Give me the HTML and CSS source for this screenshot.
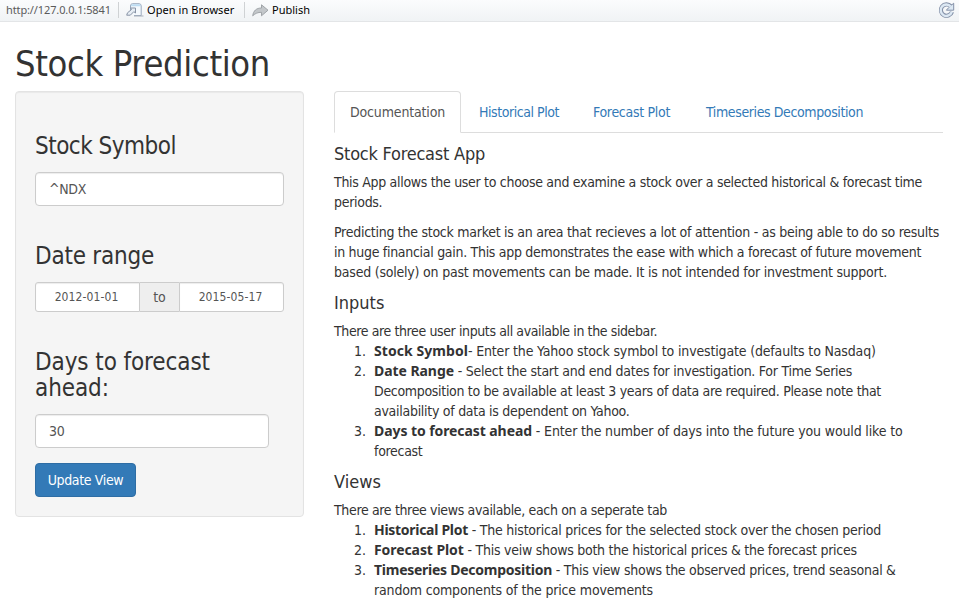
FILE: index.html
```html
<!DOCTYPE html>
<html lang="en">
<head>
<meta charset="utf-8">
<title>Stock Prediction</title>
<link rel="stylesheet" href="styles.css">
</head>
<body>
<header class="toolbar">
  <span class="url">http://127.0.0.1:5841</span>
  <span class="divider"></span>
  <span class="tool open">
    <svg width="18" height="14" viewBox="0 0 18 14">
      <path d="M4.500 9V3Q4.500 .7 6.500.7H13Q15.200.7 15.200 3V12.500H8" fill="#f4f9fd" stroke="#9aa9bd"/>
      <path d="M5 3Q5 1.200 6.500 1.200H13Q14.700 1.200 14.700 3.300H5z" fill="#bcdcf2"/>
      <path d="M4.500 5H9.500V10L7.800 8.700L4.300 12.200L.7 12.200L1.500 9.800L5.500 6.500z" fill="#e6edf4" stroke="#8793a5"/>
      <path d="M8 13H17.500" stroke="#a7afba"/>
    </svg>
    <span>Open in Browser</span>
  </span>
  <span class="divider"></span>
  <span class="tool publish">
    <svg width="17" height="13" viewBox="0 0 17 13">
      <path d="M.7 11.800C1.500 6.500 4.500 4 9.500 4V.8L16 6.200L9.500 11.800V8.300C6 8.300 3.300 9.300.7 11.800z" fill="#c3c7ca" stroke="#989da1" stroke-width=".9"/>
    </svg>
    <span>Publish</span>
  </span>
  <svg class="refresh" width="17" height="17" viewBox="0 0 17 17">
    <path d="M12.800 4.200A5.700 5.700 0 1 0 14 9.800" fill="none" stroke="#8491a8" stroke-width="4.200"/>
    <path d="M15.700 1.200V8.200H8.400L10.500 5.800z" fill="#dce8f3" stroke="#8491a8"/>
    <path d="M12.800 4.600A5.700 5.700 0 1 0 13.800 9.900" fill="none" stroke="#dce8f3" stroke-width="2.400"/>
  </svg>
</header>

<div class="container">
  <h2>Stock Prediction</h2>
  <div class="row">
    <form class="well">
      <div class="group">
        <h3 class="h-symbol">Stock Symbol</h3>
        <input class="control symbol" type="text" value="^NDX">
      </div>
      <div class="group dates">
        <h3 class="h-date">Date range</h3>
        <div class="range">
          <input class="control small" type="text" value="2012-01-01">
          <span class="addon">to</span>
          <input class="control small" type="text" value="2015-05-17">
        </div>
      </div>
      <div class="group days">
        <h3 class="h-days">Days to forecast<br>ahead:</h3>
        <input class="control number" type="text" value="30">
      </div>
      <button class="btn" type="button">Update View</button>
    </form>

    <main>
      <ul class="tabs">
        <li class="tab active t1">Documentation</li>
        <li class="tab t2">Historical Plot</li>
        <li class="tab t3">Forecast Plot</li>
        <li class="tab t4">Timeseries Decomposition</li>
      </ul>
      <h4 class="h-app">Stock Forecast App</h4>
      <p>
        <span class="line a1">This App allows the user to choose and examine a stock over a selected historical &amp; forecast time</span>
        <span class="line a2">periods.</span>
      </p>
      <p>
        <span class="line b1">Predicting the stock market is an area that recieves a lot of attention - as being able to do so results</span>
        <span class="line b2">in huge financial gain. This app demonstrates the ease with which a forecast of future movement</span>
        <span class="line b3">based (solely) on past movements can be made. It is not intended for investment support.</span>
      </p>
      <h4>Inputs</h4>
      <div class="line c0">There are three user inputs all available in the sidebar.</div>
      <ol>
        <li><span class="line c1"><b class="k1">Stock Symbol</b>- Enter the Yahoo stock symbol to investigate (defaults to Nasdaq)</span></li>
        <li>
          <span class="line c2"><b class="k2">Date Range</b> - Select the start and end dates for investigation. For Time Series</span>
          <span class="line c3">Decomposition to be available at least 3 years of data are required. Please note that</span>
          <span class="line c4">availability of data is dependent on Yahoo.</span>
        </li>
        <li>
          <span class="line c5"><b class="k3">Days to forecast ahead</b> - Enter the number of days into the future you would like to</span>
          <span class="line c6">forecast</span>
        </li>
      </ol>
      <h4>Views</h4>
      <div class="line d0">There are three views available, each on a seperate tab</div>
      <ol>
        <li><span class="line d1"><b class="k4">Historical Plot</b> - The historical prices for the selected stock over the chosen period</span></li>
        <li><span class="line d2"><b class="k5">Forecast Plot</b> - This veiw shows both the historical prices &amp; the forecast prices</span></li>
        <li>
          <span class="line d3"><b class="k6">Timeseries Decomposition</b> - This view shows the observed prices, trend seasonal &amp;</span>
          <span class="line d4">random components of the price movements</span>
        </li>
      </ol>
    </main>
  </div>
</div>
</body>
</html>
```
FILE: styles.css
```css
* { box-sizing: border-box; }
html, body { height: 100%; overflow: hidden; }
body {
  margin: 0;
  background: #fff;
  color: #333;
  font: 14px/20px "DejaVu Sans Condensed", "DejaVu Sans", sans-serif;
}

/* viewer toolbar */
.toolbar {
  display: flex;
  align-items: center;
  height: 22px;
  padding: 0 4px 1px 6px;
  border-bottom: 1px solid #e3e5e7;
  background: linear-gradient(#fbfcfd, #f0f3f5);
  font: 11px/20px "Noto Sans", sans-serif;
  color: #000;
}
.url { width: 112px; color: #5b5b5b; letter-spacing: -.12px; }
.divider { width: 1px; height: 16px; background: #cfd2d4; }
.tool { display: flex; align-items: center; }
.open { width: 125px; padding-left: 7px; gap: 3px; letter-spacing: .07px; }
.publish { padding-left: 7px; gap: 3px; }
.refresh { margin-left: auto; }

.container { padding: 22px 15px 0; }
h2, h3, h4 { margin: 0; font-weight: 400; white-space: nowrap; }
h2 { margin-bottom: 8px; font-size: 36px; line-height: 39px; letter-spacing: -.354px; }
h3 { font-size: 24px; line-height: 26px; }
h4 { margin: 11px 0 9px; font-size: 18px; line-height: 19px; }
.row { display: grid; grid-template-columns: 289px 609px; column-gap: 30px; align-items: start; }

/* sidebar */
.well {
  height: 426px;
  padding: 41px 19px 19px;
  border: 1px solid #e3e3e3;
  border-radius: 4px;
  background: #f5f5f5;
  box-shadow: inset 0 1px 1px rgba(0, 0, 0, .05);
}
.group h3 { margin-bottom: 13px; }
.dates, .days { margin-top: 37px; }
.control {
  display: block;
  width: 249px;
  height: 34px;
  padding: 6px 13px;
  border: 1px solid #ccc;
  border-radius: 4px;
  background: #fff;
  box-shadow: inset 0 1px 1px rgba(0, 0, 0, .075);
  color: #555;
  font: inherit;
}
.symbol { letter-spacing: -.3px; }
.number { width: 234px; letter-spacing: -.2px; }
.range { display: flex; width: 249px; height: 30px; }
.small { width: 105px; height: 30px; padding: 5px 2px 5px 0; font-size: 12px; text-align: center; letter-spacing: .1px; }
.small:first-child { border-radius: 3px 0 0 3px; }
.small:last-child { border-radius: 0 3px 3px 0; }
.addon {
  flex: 1;
  border: solid #ccc;
  border-width: 1px 0;
  background: #eee;
  color: #555;
  line-height: 28px;
  text-align: center;
}
.btn {
  display: block;
  width: 101px;
  height: 34px;
  margin-top: 15px;
  padding: 0;
  border: 1px solid #2e6da4;
  border-radius: 4px;
  background: #337ab7;
  color: #fff;
  font: inherit;
  letter-spacing: -.36px;
}

/* tabs */
.tabs { display: flex; gap: 2px; margin: 0; padding: 0; list-style: none; border-bottom: 1px solid #ddd; }
.tab {
  height: 42px;
  margin-bottom: -1px;
  padding: 10px 0 10px 15px;
  border: 1px solid transparent;
  border-radius: 4px 4px 0 0;
  color: #337ab7;
  white-space: nowrap;
}
.active { border-color: #ddd #ddd #fff; background: #fff; color: #555; }
.t1 { width: 127px; letter-spacing: -.16px; }
.t2 { width: 112px; letter-spacing: -.45px; }
.t3 { width: 111px; letter-spacing: -.3px; }
.t4 { width: 189px; letter-spacing: -.389px; }

/* text */
p { margin: 0 0 10px; }
ol { margin: 0 0 10px; padding-left: 40px; }
ol li::marker { content: counter(list-item) ".\00a0\00a0"; }
.line { display: block; white-space: nowrap; letter-spacing: -.3px; }
b { font-family: "Noto Sans", sans-serif; line-height: 1; }

/* letter fit of each heading and line */
.h-symbol { letter-spacing: -.504px; }
.h-date { letter-spacing: -.227px; }
.h-days { letter-spacing: -.095px; }
.h-app { letter-spacing: -.231px; }
.a1 { letter-spacing: -.306px; }
.b1 { letter-spacing: -.267px; }
.b2 { letter-spacing: -.296px; }
.b3 { letter-spacing: -.216px; }
.c0 { letter-spacing: -.39px; }
.c1 { letter-spacing: -.16px; }
.c2 { letter-spacing: -.26px; }
.c3 { letter-spacing: -.314px; }
.c4 { letter-spacing: -.28px; }
.c5 { letter-spacing: -.15px; }
.d0 { letter-spacing: -.349px; }
.d1 { letter-spacing: -.24px; }
.d2 { letter-spacing: -.26px; }
.d3 { letter-spacing: -.26px; }
.d4 { letter-spacing: -.163px; }
.k1 { letter-spacing: .065px; }
.k2 { letter-spacing: -.059px; }
.k3 { letter-spacing: -.077px; }
.k4 { letter-spacing: -.287px; }
.k5 { letter-spacing: -.08px; }
.k6 { letter-spacing: -.262px; }
```
